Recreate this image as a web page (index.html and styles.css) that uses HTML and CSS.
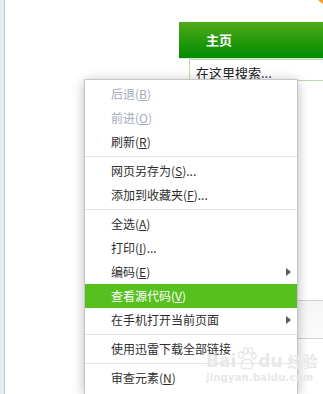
FILE: index.html
```html
<!DOCTYPE html>
<html lang="zh">
<head>
<meta charset="utf-8">
<link rel="stylesheet" href="styles.css">
</head>
<body>
<div class="page">
  <div class="rail"></div>
  <div class="content">
    <div class="header"><span class="home">主页</span></div>
    <div class="search">在这里搜索...</div>
    <div class="panel"></div>
  </div>
  <div class="corner"></div>
  <div class="menu">
    <div class="item disabled">后退(<u>B</u>)</div>
    <div class="item disabled">前进(<u>O</u>)</div>
    <div class="item">刷新(<u>R</u>)</div>
    <div class="sep"></div>
    <div class="item">网页另存为(<u>S</u>)...</div>
    <div class="item">添加到收藏夹(<u>F</u>)...</div>
    <div class="sep"></div>
    <div class="item">全选(<u>A</u>)</div>
    <div class="item">打印(<u>I</u>)...</div>
    <div class="item sub">编码(<u>E</u>)</div>
    <div class="item active">查看源代码(<u>V</u>)</div>
    <div class="item sub">在手机打开当前页面</div>
    <div class="sep"></div>
    <div class="item">使用迅雷下载全部链接</div>
    <div class="sep"></div>
    <div class="item">审查元素(<u>N</u>)</div>
  </div>
  <div class="watermark">
    <div class="wm-top"><span>Bai</span><svg class="paw" width="20" height="24" viewBox="0 0 20 24"><g fill="none" stroke="#e6e6e6" stroke-width="1.3"><ellipse cx="4" cy="8" rx="2.5" ry="3.2"/><ellipse cx="8.5" cy="3.8" rx="2.3" ry="3"/><ellipse cx="13.5" cy="3.8" rx="2.3" ry="3"/><ellipse cx="17" cy="9" rx="2.2" ry="3"/><path d="M4 19c0-4 3-7 6-7s6 3 6 7c0 3-3 3-6 2c-3 1-6 1-6-2z"/></g></svg><span>du</span><span class="wm-cn">经验</span></div>
    <div class="wm-url">jingyan.baidu.com</div>
  </div>
</div>
</body>
</html>
```
FILE: styles.css
```css
html, body {
  margin: 0;
  padding: 0;
}
body {
  width: 323px;
  height: 394px;
  overflow: hidden;
  background: #fff;
  font-family: "Noto Sans CJK SC", "Noto Sans", sans-serif;
}
.page {
  position: relative;
  display: flex;
  width: 323px;
  height: 394px;
  overflow: hidden;
}
.rail {
  width: 4px;
  background: #e4ebf6;
  border-right: 1px solid #b6c8da;
  flex: none;
}
.content {
  flex: 1;
  padding-top: 22px;
  padding-left: 174px;
}
.header {
  height: 36px;
  background: linear-gradient(#4faa18, #018b01);
  display: flex;
  align-items: center;
  padding-left: 27px;
  border-bottom: 1px solid #d8e8d0;
}
.home {
  color: #fff;
  font-size: 13px;
  font-weight: bold;
  line-height: 14px;
  margin-top: -1px;
}
.search {
  margin-left: 10px;
  height: 20px;
  border: 1px solid #b9dca9;
  border-right: none;
  padding-left: 6px;
  font-size: 13px;
  line-height: 25px;
  color: #222;
  overflow: hidden;
  white-space: nowrap;
}
.panel {
  margin-top: 219px;
  height: 37px;
  border-top: 1px solid #d0d0d0;
  border-bottom: 1px solid #d0d0d0;
  background: linear-gradient(#f6f6f6, #fbfbfb);
}
.corner {
  position: absolute;
  right: 0;
  top: 0;
  width: 0;
  height: 0;
  border-top: 4px solid #f39a2a;
  border-left: 5px solid transparent;
}
.menu {
  position: absolute;
  left: 84px;
  top: 79px;
  width: 212px;
  height: 312px;
  padding-top: 2px;
  background: #fff;
  border: 1px solid #c6c6c6;
  border-bottom: none;
  border-radius: 2px 2px 0 0;
  box-shadow: 0 2px 12px rgba(0, 0, 0, 0.28);
}
.item {
  position: relative;
  height: 24px;
  line-height: 24px;
  padding-left: 26px;
  font-size: 12px;
  color: #2e2e2e;
  white-space: nowrap;
}
.item u {
  text-underline-offset: 1px;
}
.item.disabled {
  color: #a3abbb;
}
.item.active {
  background: #56c01e;
  color: #fff;
}
.item.sub::after {
  content: "";
  position: absolute;
  right: 6px;
  top: 8px;
  border-left: 5px solid #4f5e74;
  border-top: 4px solid transparent;
  border-bottom: 4px solid transparent;
}
.sep {
  height: 1px;
  background: #e6e6e6;
  margin: 2px 0;
}
.watermark {
  position: absolute;
  left: 206px;
  top: 345px;
  color: #e8e8e8;
  font-family: "DejaVu Sans", sans-serif;
  font-weight: bold;
  pointer-events: none;
}
.wm-top {
  display: flex;
  align-items: flex-end;
  font-size: 17px;
  line-height: 20px;
  height: 26px;
}
.paw {
  margin: 0 1px;
}
.wm-cn {
  font-family: "Noto Sans CJK SC", sans-serif;
  font-size: 15px;
  margin-left: 5px;
}
.wm-url {
  font-size: 10px;
  line-height: 12px;
  margin-top: 1px;
  letter-spacing: 0.2px;
}
```
